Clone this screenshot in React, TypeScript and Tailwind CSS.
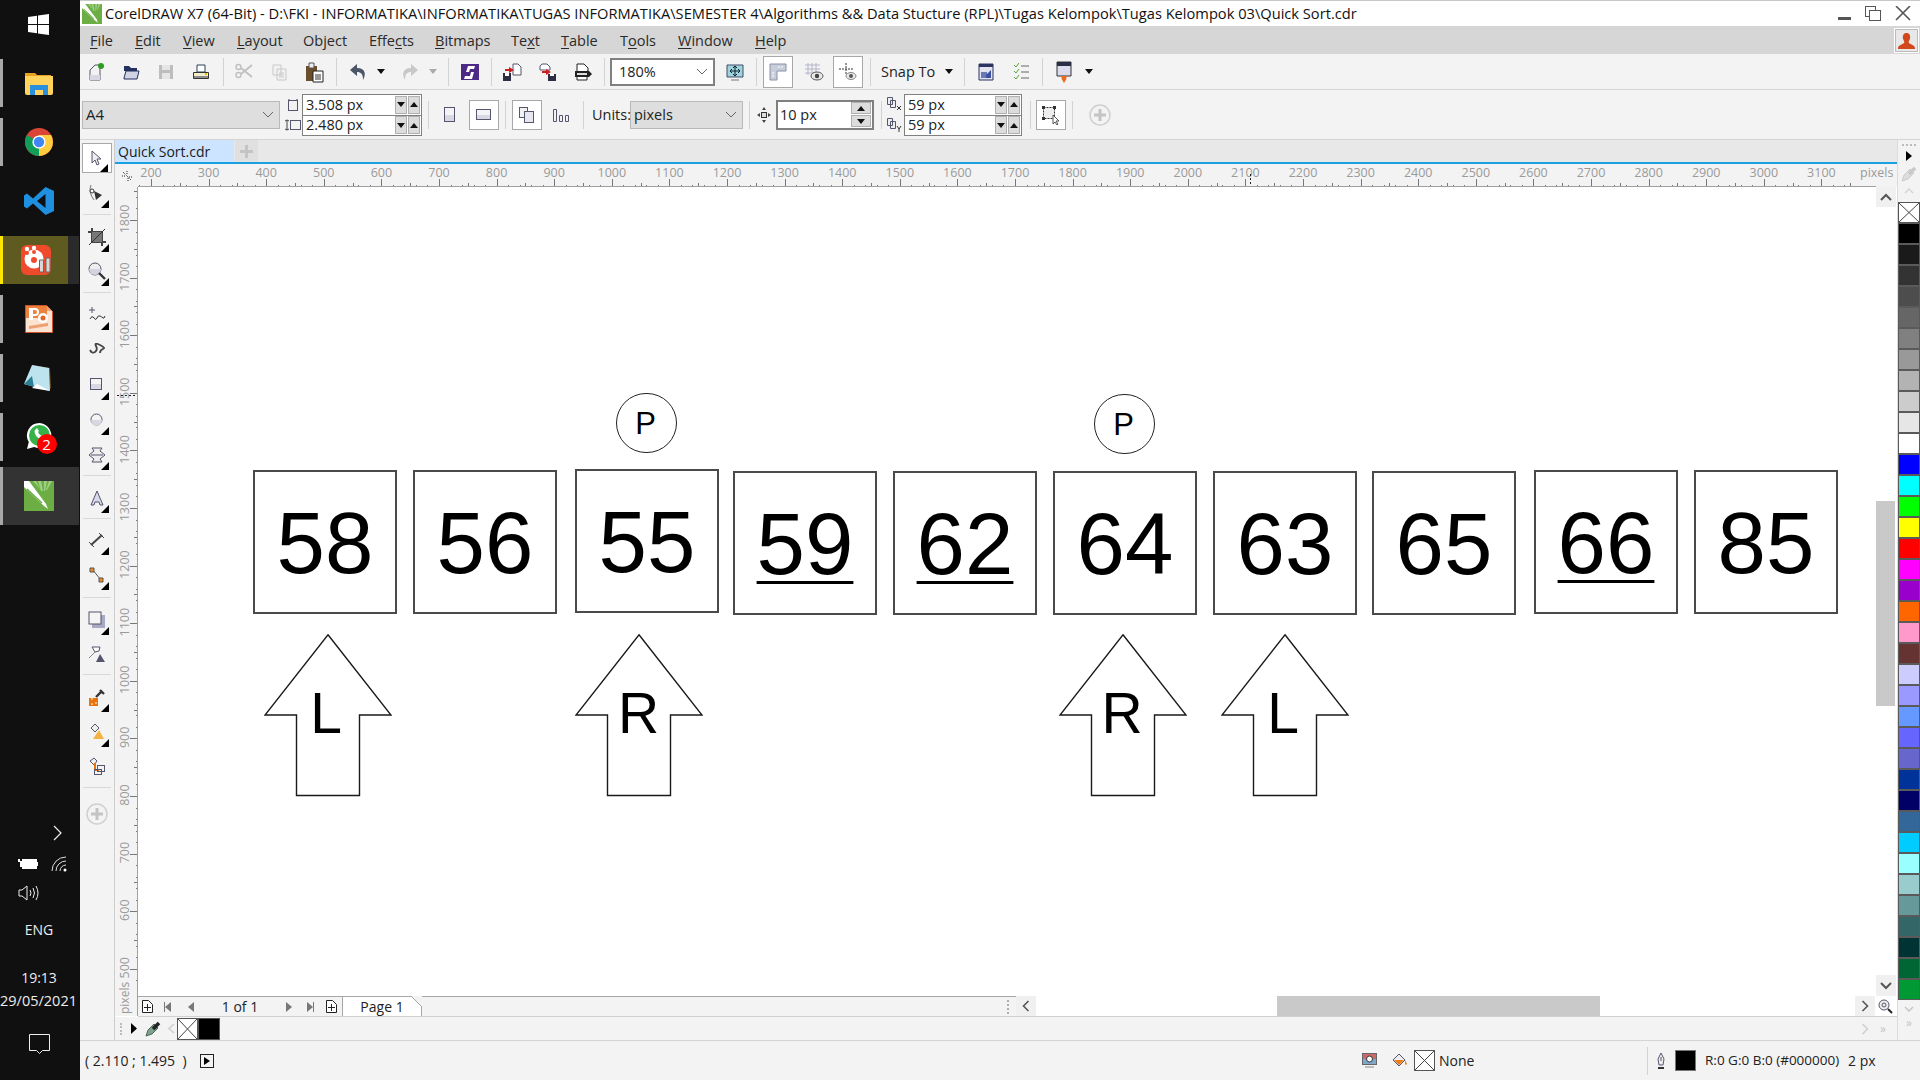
import React from "react";

const F = "[font-family:'Open_Sans',sans-serif]";
const ink = "#55556e";

function Ic({ w = 20, h = 20, children }: { w?: number; h?: number; children: React.ReactNode }) {
  return (
    <svg width={w} height={h} viewBox={`0 0 ${w} ${h}`} fill="none" className="block shrink-0">
      {children}
    </svg>
  );
}

function Sep() {
  return (
    <div className="w-[6px] h-full flex justify-center items-center shrink-0">
      <div className="w-px h-[28px] bg-[#d2d2d2]" />
    </div>
  );
}

function Caret({ gray }: { gray?: boolean }) {
  return (
    <Ic w={8} h={5}>
      <path d="M0 0h8L4 5z" fill={gray ? "#aaa" : "#111"} />
    </Ic>
  );
}

function Chev() {
  return (
    <Ic w={12} h={8}>
      <path d="M1 1l5 5 5-5" stroke="#666" />
    </Ic>
  );
}

function Corner() {
  return (
    <svg width="8" height="8" viewBox="0 0 8 8" className="absolute right-[3px] bottom-[0px]">
      <path d="M8 0v8H0z" fill="#000" />
    </svg>
  );
}

function CrossBox({ w, h, cls }: { w: number; h: number; cls?: string }) {
  return (
    <svg width={w} height={h} viewBox={`0 0 ${w} ${h}`} className={"block shrink-0 " + (cls ?? "")}>
      <rect x=".5" y=".5" width={w - 1} height={h - 1} fill="#fff" stroke="#555" />
      <path d={`M1 1L${w - 1} ${h - 1}M${w - 1} 1L1 ${h - 1}`} stroke="#444" />
    </svg>
  );
}

function CoreLogo({ s }: { s: number }) {
  return (
    <svg width={s} height={s} viewBox="0 0 30 30" className="block">
      <rect width="30" height="30" fill="#6cae44" />
      <path d="M0 6L20 25l4 3-2-5L5 0H0z" fill="#fff" />
      <path d="M3 8l15 14" stroke="#6cae44" strokeWidth="1.4" />
      <path d="M14 0h3l2 10h-2zM20 0h3l-2 10h-1zM9 0h3l4 8z" fill="#9fcf85" />
      <path d="M25 0h3l-5 9h-1z" fill="#9fcf85" />
    </svg>
  );
}

function Taskbar() {
  const Bar = ({ on = true }: { on?: boolean }) =>
    on ? <div className="absolute left-0 top-0 bottom-0 w-[3px] bg-[#a8a8a8]" /> : null;
  const Slot = ({ children, bar = true }: { children: React.ReactNode; bar?: boolean }) => (
    <div className="relative h-[48px] flex items-center justify-center mt-[11px] pr-[2px]">
      <Bar on={bar} />
      {children}
    </div>
  );
  return (
    <div className={"w-[79px] h-full bg-[#101010] flex flex-col shrink-0 text-[#ececec] text-[14px] " + F}>
      <div className="h-[48px] flex items-center justify-center pr-[2px]">
        <Ic w={21} h={21}>
          <path d="M0 3l9-1.2V10H0zM10 1.600L21 0v10H10zM0 11h9v8.200L0 18zM10 11h11v10l-11-1.600z" fill="#fff" />
        </Ic>
      </div>
      <Slot>
        <Ic w={28} h={24}>
          <path d="M0 2h10l2 2h14v5H0z" fill="#e9a321" />
          <path d="M0 5h28v17a2 2 0 01-2 2H2a2 2 0 01-2-2z" fill="#ffd35c" />
          <path d="M5 14h18v10h-5v-5h-8v5H5z" fill="#2a8fdc" />
        </Ic>
      </Slot>
      <Slot>
        <Ic w={28} h={28}>
          <circle cx="14" cy="14" r="14" fill="#db4437" />
          <path d="M14 14L1.900 7A14 14 0 0 0 14 28z" fill="#0f9d58" />
          <path d="M14 14v14A14 14 0 0 0 26.100 7H14z" fill="#ffcd40" />
          <circle cx="14" cy="14" r="6.600" fill="#fff" />
          <circle cx="14" cy="14" r="5.200" fill="#4285f4" />
        </Ic>
      </Slot>
      <Slot bar={false}>
        <Ic w={30} h={30}>
          <path d="M21.500 1L30 5v20l-8.500 4L9 17.500l-6 5-3-2V9.500l3-2 6 5zM21.500 8L13 15l8.500 7z" fill="#1f8fe0" />
        </Ic>
      </Slot>
      <div className="relative h-[48px] mt-[11px] flex bg-[#2a2a2a]">
        <div className="w-[3px] bg-[#ffe600]" />
        <div className="w-[65px] bg-[#5f5a20] flex items-center justify-center">
          <Ic w={30} h={30}>
            <rect width="30" height="30" rx="6" fill="#ef4a2b" />
            <circle cx="13" cy="14" r="9.500" fill="#fff" />
            <circle cx="13" cy="15" r="3" fill="#ef4a2b" />
            <circle cx="6" cy="8" r="2" fill="#ef4a2b" />
            <circle cx="13" cy="7" r="2" fill="#ef4a2b" />
            <circle cx="6" cy="4" r="2.200" fill="#fff" />
            <circle cx="13" cy="3" r="2.200" fill="#fff" />
            <path d="M18.500 15h4v12h-4zM25 13h4v14h-4z" fill="#d8d8d8" stroke="#666" />
          </Ic>
        </div>
      </div>
      <Slot>
        <Ic w={28} h={28}>
          <path d="M.5.5h21l6 6v21H.500z" fill="#fbe3d2" stroke="#c9532a" />
          <path d="M22 1l5 5h-5z" fill="#f2a67a" />
          <path d="M1 1h21v12H1z" fill="#f0813d" />
          <path d="M4 15V3h6a4 4 0 010 8H8v4z" fill="#fff" />
          <path d="M8 5h2a1.500 1.500 0 010 4H8z" fill="#f0813d" />
          <circle cx="18" cy="13" r="5" fill="#fff" />
          <circle cx="18" cy="13" r="2.500" fill="#e8622c" />
          <path d="M4 21l19-3v3L4 24z" fill="#f0a070" />
        </Ic>
      </Slot>
      <Slot>
        <Ic w={29} h={28}>
          <path d="M8 1l18 3 1 20-3 3z" fill="#6b4a18" />
          <path d="M8 1l17 3 1 23L0 20z" fill="#bde4ee" />
          <path d="M0 20l8-8 2 11z" fill="#2d7f96" />
          <path d="M13 20l13 7-18-3z" fill="#fff" />
        </Ic>
      </Slot>
      <Slot>
        <div className="relative w-[30px] h-[30px] pl-[2px]">
          <Ic w={27} h={28}>
            <path d="M13.500 1a12.500 12.500 0 00-10.700 19L1 27l7.200-1.900A12.500 12.500 0 1013.500 1z" fill="#fff" />
            <circle cx="13.500" cy="13.500" r="10.500" fill="#35b34a" />
            <path d="M9 8c-2 3 3 10 9 10l2-3-3-2-1 1c-2-1-3-2-4-4l1-1-2-3z" fill="#fff" />
          </Ic>
          <div className={"absolute left-[13px] top-[12px] w-[20px] h-[20px] rounded-full bg-[#f00] text-white text-[15px] leading-[20px] text-center " + F}>2</div>
        </div>
      </Slot>
      <div className="relative h-[58px] mt-[6px] bg-[#333333] flex items-center justify-center pr-[2px]">
        <Bar />
        <CoreLogo s={30} />
      </div>
      <div className="flex-1 flex flex-col">
        <div className="mt-[298px] h-[20px] flex justify-end pr-[16px] items-center">
          <Ic w={10} h={16}>
            <path d="M1 1l7 7-7 7" stroke="#eee" strokeWidth="1.200" />
          </Ic>
        </div>
        <div className="mt-[11px] h-[20px] flex items-center pl-[18px] gap-[13px]">
          <Ic w={20} h={12}>
            <path d="M0 1h2v3H0zM2 3h2v6H2z" fill="#fff" />
            <rect x="4.500" y="1.500" width="14" height="9" stroke="#fff" fill="#fff" />
            <path d="M19 4h1v4h-1z" fill="#fff" />
          </Ic>
          <Ic w={16} h={16}>
            <path d="M1 15A14 14 0 0115 1M5 15A10 10 0 0115 5M9 15a6 6 0 016-6" stroke="#ddd" />
            <circle cx="14" cy="14" r="1.500" fill="#fff" />
          </Ic>
        </div>
        <div className="mt-[9px] h-[20px] flex items-center pl-[18px]">
          <Ic w={21} h={18}>
            <path d="M1 6h3l5-4v14l-5-4H1z" stroke="#eee" />
            <path d="M12 6q2 3 0 6M15 4q3 5 0 10M18 2q4 7 0 14" stroke="#eee" />
          </Ic>
        </div>
        <div className="mt-[17px] h-[20px] leading-[20px] text-center pr-[1px]">ENG</div>
        <div className="mt-[28px] h-[20px] leading-[20px] text-center pr-[1px]">19:13</div>
        <div className="mt-[3px] h-[20px] leading-[20px] text-center text-[14.500px] whitespace-nowrap pr-[2px]">29/05/2021</div>
        <div className="mt-[23px] flex justify-center pr-[1px]">
          <Ic w={21} h={20}>
            <path d="M.5.5h20v16h-7l-3 3-3-3h-7z" stroke="#eee" />
          </Ic>
        </div>
      </div>
    </div>
  );
}

function Menu() {
  const U = ({ children }: { children: string }) => <span className="underline underline-offset-2">{children}</span>;
  return (
    <div className={"h-[28px] bg-[#d6d6d6] flex items-center pl-[10px] pt-[1px] text-[14.500px] text-[#2a2a2a] relative " + F}>
      <div className="w-[45px]"><U>F</U>ile</div>
      <div className="w-[48px]"><U>E</U>dit</div>
      <div className="w-[54px]"><U>V</U>iew</div>
      <div className="w-[66px]"><U>L</U>ayout</div>
      <div className="w-[66px]">Ob<U>j</U>ect</div>
      <div className="w-[66px]">Effe<U>c</U>ts</div>
      <div className="w-[76px]"><U>B</U>itmaps</div>
      <div className="w-[50px]">Te<U>x</U>t</div>
      <div className="w-[59px]"><U>T</U>able</div>
      <div className="w-[58px]">T<U>o</U>ols</div>
      <div className="w-[77px]"><U>W</U>indow</div>
      <div><U>H</U>elp</div>
      <div className="ml-auto mr-[1px] -mt-[1px] w-[25px] h-[25px] border border-white bg-[#bbb] flex items-center justify-center">
        <Ic w={21} h={21}>
          <path d="M0 0h21v21H0z" fill="#e8e8e8" />
          <path d="M10.500 3c2.700 0 4 2.200 3.600 5.300-.3 1.800-1.400 2.700-1.400 4 0 1.800 6.300 2.700 6.300 5.700v1H2v-1c0-3 6.300-3.900 6.300-5.700 0-1.300-1.100-2.200-1.400-4C6.500 5.200 7.800 3 10.500 3z" fill="#d2481c" />
        </Ic>
      </div>
    </div>
  );
}

function Btn({ cls, children }: { cls: string; children: React.ReactNode }) {
  return <div className={"flex items-center justify-center shrink-0 " + cls}>{children}</div>;
}

function Toolbar() {
  const box = "h-[32px] border border-[#a8a8a8] bg-white";
  return (
    <div className={"h-[36px] bg-[#f3f3f3] border-b border-[#d4d4d4] flex items-center text-[14.500px] text-[#222] " + F}>
      <Btn cls="w-[35px] -ml-[2px]">
        <Ic>
          <path d="M4 8l5-5h5v15H4z" fill="#f2f2f2" stroke={ink} />
          <path d="M4 13h10v5H4z" fill="#d8d8e2" />
          <circle cx="15" cy="4" r="3" fill="#2f9b22" />
        </Ic>
      </Btn>
      <Btn cls="w-[35px]">
        <Ic>
          <path d="M3 4h5l2 2h6v3H3z" fill="#24305e" />
          <path d="M3 16l2-7h13l-2 8H3z" fill="#cfd3e4" stroke="#24305e" />
        </Ic>
      </Btn>
      <Btn cls="w-[35px]">
        <Ic>
          <path d="M3 3h14v14H3z" fill="#bdbdbd" />
          <path d="M6 3h8v5H6z" fill="#e6e6e6" />
          <path d="M6 11h8v6H6z" fill="#e6e6e6" />
        </Ic>
      </Btn>
      <Btn cls="w-[35px]">
        <Ic>
          <path d="M6 3h8v7H6z" fill="#fff" stroke="#2c3e5a" />
          <path d="M2.500 10.500h15v6h-15z" fill="#f1edc9" stroke="#333" />
          <path d="M3 14h14v2H3z" fill="#8a8a8a" />
          <path d="M14 11h2v2h-2z" fill="#e4c200" />
        </Ic>
      </Btn>
      <div className="ml-[2px]"><Sep /></div>
      <Btn cls="w-[35px]">
        <Ic>
          <path d="M18 3L7 12M18 15L7 6" stroke="#c0c0c0" strokeWidth="1.800" />
          <circle cx="4.500" cy="5" r="2.500" stroke="#c0c0c0" strokeWidth="1.400" />
          <circle cx="4.500" cy="13" r="2.500" stroke="#c0c0c0" strokeWidth="1.400" />
        </Ic>
      </Btn>
      <Btn cls="w-[35px]">
        <Ic>
          <path d="M4 3h8v10H4zM8 7h9v11H8z" fill="#f2f2f2" stroke="#c8c8c8" />
          <path d="M10 11h5M10 13h5M10 15h5" stroke="#c8c8c8" />
        </Ic>
      </Btn>
      <Btn cls="w-[35px]">
        <Ic w={20} h={22}>
          <path d="M2 5h11v15H2z" fill="#6b4f2a" />
          <path d="M5 2h5v5H5z" fill="#eee" stroke="#555" />
          <path d="M9 10h10v11H9z" fill="#fff" stroke="#222" />
          <path d="M11 14h6M11 16h6M11 18h6" stroke="#333" />
        </Ic>
      </Btn>
      <div className="ml-[2px]"><Sep /></div>
      <Btn cls="w-[32px] ml-[3px]">
        <Ic w={18} h={18}>
          <path d="M8 1L1 7l7 6V9c4 0 6 2 6 8 3-5 3-12-6-12z" fill="#4a5568" />
        </Ic>
      </Btn>
      <Btn cls="w-[14px]"><Caret /></Btn>
      <Btn cls="w-[30px] ml-[7px]">
        <Ic w={18} h={18}>
          <path d="M10 1l7 6-7 6V9c-4 0-6 2-6 8-3-5-3-12 6-12z" fill="#c8c8c8" />
        </Ic>
      </Btn>
      <Btn cls="w-[14px] ml-[1px]"><Caret gray /></Btn>
      <div className="ml-[5px]"><Sep /></div>
      <Btn cls="w-[34px] ml-[2px]">
        <Ic>
          <path d="M1 2h18v16H1z" fill="#4c2a86" />
          <path d="M15 4H8L6 10h5l-1 4H5l-1 3h8l2-7H9l1-3h4z" fill="#fff" />
        </Ic>
      </Btn>
      <div className="ml-[1px]"><Sep /></div>
      <Btn cls="w-[36px]">
        <Ic>
          <path d="M11 2h5l3 3v8h-8z" fill="#fff" stroke={ink} />
          <path d="M7 5l5 3-5 3V9H3V7h4z" fill="#cc1f1f" />
          <path d="M1 11h8v8H1z" fill="#2d2d44" />
          <path d="M3 11h4v3H3z" fill="#fff" />
        </Ic>
      </Btn>
      <Btn cls="w-[36px]">
        <Ic>
          <path d="M4 2h5l3 3v3H2V4z" fill="#fff" stroke={ink} />
          <path d="M8 7l5 3-5 3v-2H4V9h4z" fill="#cc1f1f" />
          <path d="M10 12h8v7h-8z" fill="#2d2d44" />
          <path d="M12 12h4v2h-4z" fill="#fff" />
        </Ic>
      </Btn>
      <Btn cls="w-[34px]">
        <Ic>
          <path d="M4 2h7l4 4v3h-1v9H4z" fill="#fff" stroke="#222" />
          <path d="M2 9h14l3 3-3 3H2z" fill="#222" />
          <path d="M4 11h10v2H4z" fill="#ddd" />
        </Ic>
      </Btn>
      <div className="ml-[1px]"><Sep /></div>
      <div className="ml-[3px] w-[105px] flex items-center justify-between pl-[7px] pr-[5px] shrink-0 border-2 border-[#808080] h-[28px] bg-white">
        <span>180%</span>
        <Chev />
      </div>
      <Btn cls="w-[34px] ml-[3px]">
        <Ic>
          <path d="M2 3h16v12H2z" fill="#9ed4dc" stroke="#444a6a" />
          <path d="M10 4v10M5 9h10M8 6l2-2 2 2M8 12l2 2 2-2M7 7L5 9l2 2M13 7l2 2-2 2" stroke="#123" />
          <path d="M6 18h8" stroke="#777" />
        </Ic>
      </Btn>
      <div className="ml-[1px]"><Sep /></div>
      <Btn cls={"w-[30px] ml-[4px] " + box}>
        <Ic>
          <path d="M2 2h16v7H9v9H2z" fill="#c8cdda" stroke="#8a90a6" />
          <path d="M11 4v2M14 4v2M4 11h2M4 14h2" stroke="#fff" />
        </Ic>
      </Btn>
      <Btn cls="w-[38px] ml-[2px]">
        <Ic>
          <path d="M1 3h15M1 7h15M1 11h12M4 1v12M8 1v12M12 1v10" stroke="#b4b4cc" />
          <ellipse cx="13" cy="14" rx="6" ry="4" fill="#e8e8e8" stroke="#555" />
          <circle cx="13" cy="14" r="2.200" fill="#444" />
        </Ic>
      </Btn>
      <Btn cls={"w-[30px] " + box}>
        <Ic>
          <path d="M8 1v12M1 7h14" stroke="#333" strokeDasharray="2 1" />
          <ellipse cx="13" cy="14" rx="5" ry="3.500" fill="#e8e8e8" stroke="#888" />
          <circle cx="13" cy="14" r="2" fill="#555" />
        </Ic>
      </Btn>
      <div className="ml-[4px]"><Sep /></div>
      <div className="ml-[8px] w-[53px] shrink-0 whitespace-nowrap">Snap To</div>
      <Btn cls="w-[14px] ml-[8px]"><Caret /></Btn>
      <div className="ml-[5px]"><Sep /></div>
      <Btn cls="w-[34px] ml-[2px]">
        <Ic>
          <path d="M3 2h14v16H3z" fill="#e4e4f0" stroke="#2c3560" />
          <path d="M3 2h14v3H3z" fill="#2c3560" />
          <path d="M5 10h6v6H5z" fill="#6a7ab8" />
          <path d="M10 13l5-5v8h-5z" fill="#3c4fa0" />
        </Ic>
      </Btn>
      <Btn cls="w-[34px] ml-[1px]">
        <Ic>
          <path d="M3 3l2 2 3-4M3 9l2 2 3-4M3 15l2 2 3-4" stroke="#5aa23c" />
          <path d="M10 4h8M10 10h8M10 16h8" stroke="#666" />
        </Ic>
      </Btn>
      <div className="ml-[1px]"><Sep /></div>
      <Btn cls="w-[36px] ml-[1px]">
        <Ic w={20} h={22}>
          <path d="M3 1h14v14H3z" fill="#dcdcec" stroke="#333" />
          <path d="M3 1h14v4H3z" fill="#2a2f45" />
          <path d="M7 15h6l-1 3 1-1-3 5-3-5 1 1z" fill="#ef6a1c" />
        </Ic>
      </Btn>
      <Btn cls="w-[12px] ml-[1px]"><Caret /></Btn>
    </div>
  );
}

function Spin({ text }: { text: string }) {
  const b = "w-[12px] h-[18px] bg-[#dcdcdc] border border-[#b0b0b0] flex items-center justify-center";
  return (
    <div className="flex-1 min-h-0 w-full bg-white flex items-center justify-between pl-[3px] pr-[1px]">
      <span>{text}</span>
      <div className="flex gap-[1px]">
        <div className={b}><Caret /></div>
        <div className={b}><div className="rotate-180"><Caret /></div></div>
      </div>
    </div>
  );
}

function PropBar() {
  const btn = "h-[30px] border border-[#a8a8a8] bg-white";
  return (
    <div className={"h-[50px] bg-[#f3f3f3] border-b border-[#d4d4d4] flex items-center text-[14.500px] text-[#222] " + F}>
      <div className="ml-[2px] w-[198px] h-[28px] shrink-0 bg-[#dedede] border border-[#b8b8b8] flex items-center justify-between pl-[3px] pr-[5px]">
        <span className="text-[15px]">A4</span>
        <Chev />
      </div>
      <div className="ml-[3px] w-[19px] shrink-0 flex flex-col gap-[8px] items-center">
        <Ic w={12} h={13}>
          <path d="M2 1v1M10 1v1" stroke="#444" />
          <rect x=".5" y="2.500" width="9" height="10" fill="#f2f2f2" stroke={ink} transform="translate(1 0)" />
        </Ic>
        <Ic w={16} h={12}>
          <path d="M2 1v10M0 2l2-1 2 1M0 10l2 1 2-1" stroke="#444" />
          <rect x="5.500" y="1.500" width="10" height="9" fill="#f2f2f2" stroke={ink} />
        </Ic>
      </div>
      <div className="w-[120px] shrink-0 border border-[#808080] flex flex-col h-[42px] mt-[1px] divide-y divide-[#808080]">
        <Spin text="3.508 px" />
        <Spin text="2.480 px" />
      </div>
      <div className="ml-[3px]"><Sep /></div>
      <Btn cls="w-[38px]">
        <Ic w={12} h={16}>
          <rect x=".5" y=".5" width="10" height="14" fill="#f4f4f4" stroke={ink} />
          <path d="M1 8h9v6H1z" fill="#d8d8e2" />
        </Ic>
      </Btn>
      <Btn cls={"w-[30px] " + btn}>
        <Ic w={16} h={12}>
          <rect x=".5" y=".5" width="14" height="10" fill="#f4f4f4" stroke={ink} />
          <path d="M1 6h13v4H1z" fill="#d8d8e2" />
        </Ic>
      </Btn>
      <div className="ml-[3px]"><Sep /></div>
      <Btn cls={"w-[30px] ml-[4px] " + btn}>
        <Ic w={18} h={18}>
          <rect x="1.500" y="1.500" width="8" height="10" fill="#f2f2f2" stroke={ink} />
          <rect x="6.500" y="5.500" width="9" height="11" fill="#e6e6ee" stroke={ink} />
        </Ic>
      </Btn>
      <Btn cls="w-[38px]">
        <Ic w={18} h={14}>
          <path d="M1.500 1.500h3v12h-3zM7.500 7.500h3v6h-3zM13.500 7.500h3v6h-3z" stroke={ink} fill="#f2f2f2" />
        </Ic>
      </Btn>
      <Sep />
      <div className="ml-[6px] w-[38px] shrink-0 whitespace-nowrap">Units:</div>
      <div className="w-[113px] h-[28px] shrink-0 bg-[#dedede] border border-[#b8b8b8] flex items-center justify-between pl-[3px] pr-[5px]">
        <span>pixels</span>
        <Chev />
      </div>
      <div className="ml-[3px]"><Sep /></div>
      <Btn cls="w-[24px]">
        <Ic w={14} h={16}>
          <rect x="4.500" y="5.500" width="5" height="5" stroke="#333" fill="#ddd" />
          <path d="M7 0l2 3H5zM7 16l2-3H5zM0 8l3-2v4zM14 8l-3-2v4z" fill="#444" />
        </Ic>
      </Btn>
      <div className="w-[98px] h-[30px] shrink-0 bg-white border-2 border-[#808080] flex items-center justify-between pl-[2px] pr-[1px]">
        <span>10 px</span>
        <div className="flex flex-col gap-[1px]">
          <div className="w-[20px] h-[12px] bg-[#dcdcdc] border border-[#b0b0b0] flex items-center justify-center"><div className="rotate-180"><Caret /></div></div>
          <div className="w-[20px] h-[12px] bg-[#dcdcdc] border border-[#b0b0b0] flex items-center justify-center"><Caret /></div>
        </div>
      </div>
      <div className="ml-[4px]"><Sep /></div>
      <div className="w-[20px] shrink-0 flex flex-col items-center gap-[7px]">
        <Ic w={15} h={14}>
          <path d="M.5.5h5v7h-5zM3.500 3.500h5v7h-5z" stroke={ink} fill="#eee" />
          <path d="M10 9l4 4M14 9l-4 4" stroke="#333" />
        </Ic>
        <Ic w={15} h={14}>
          <path d="M.5.5h5v7h-5zM3.500 3.500h5v7h-5z" stroke={ink} fill="#eee" />
          <path d="M10 8l2 3 2-3M12 11v3" stroke="#333" />
        </Ic>
      </div>
      <div className="w-[118px] shrink-0 border border-[#808080] h-[42px] mt-[1px] flex flex-col divide-y divide-[#808080]">
        <Spin text="59 px" />
        <Spin text="59 px" />
      </div>
      <div className="ml-[5px]"><Sep /></div>
      <Btn cls={"w-[30px] ml-[3px] " + btn}>
        <Ic w={20} h={20}>
          <rect x="2.500" y="2.500" width="11" height="11" stroke="#333" strokeDasharray="2 1" fill="#eee" />
          <path d="M1 1h3v3H1zM12 1h3v3h-3zM1 12h3v3H1z" fill="#333" />
          <path d="M12 10v9l2-2 2 3 1-1-2-3h3z" fill="#fff" stroke="#555" />
        </Ic>
      </Btn>
      <div className="ml-[3px]"><Sep /></div>
      <Btn cls="w-[22px] ml-[14px]">
        <Plus />
      </Btn>
    </div>
  );
}

function Plus() {
  return (
    <Ic w={22} h={22}>
      <circle cx="11" cy="11" r="10" fill="#f3f3f3" stroke="#cfcfcf" strokeWidth="1.500" />
      <path d="M11 5v12M5 11h12" stroke="#c4c4c4" strokeWidth="3" />
    </Ic>
  );
}

function Tool({ cls = "", tri = true, children }: { cls?: string; tri?: boolean; children: React.ReactNode }) {
  return (
    <div className={"relative w-[30px] h-[30px] flex items-center justify-center shrink-0 " + cls}>
      {children}
      {tri ? <Corner /> : null}
    </div>
  );
}

function ToolSep({ cls }: { cls: string }) {
  return <div className={"w-[28px] h-px bg-[#d8d8d8] shrink-0 " + cls} />;
}

function Toolbox() {
  return (
    <div className="w-[35px] h-full bg-[#f3f3f3] border-r border-[#cdcdcd] flex flex-col items-center pt-[3px] shrink-0 pr-[1px]">
      <Tool cls="border border-[#a8a8a8] bg-white">
        <Ic w={14} h={17}>
          <path d="M2 1v12l3-3 2 5 2-1-2-5h4z" fill="#eee" stroke={ink} />
        </Ic>
      </Tool>
      <Tool cls="mt-[5px]">
        <Ic w={18} h={18}>
          <path d="M3 1q-3 7 3 15" stroke="#777" />
          <circle cx="4" cy="7" r="2" fill="#fff" stroke="#333" />
          <path d="M6 7l8 4-6 5z" fill="#333" />
        </Ic>
      </Tool>
      <ToolSep cls="mt-[6px]" />
      <Tool cls="mt-[7px]">
        <Ic w={18} h={18}>
          <path d="M4 0v14h14" stroke="#444" strokeWidth="2" />
          <path d="M0 4h14v14" stroke="#444" strokeWidth="2" />
          <path d="M4 4h10v10H4z" fill="#777" />
          <path d="M17 1L1 17" stroke="#333" />
        </Ic>
      </Tool>
      <Tool cls="mt-[4px]">
        <Ic w={18} h={18}>
          <circle cx="7" cy="7" r="6" fill="#eee" stroke={ink} />
          <path d="M1 7h12a6 6 0 01-12 0z" fill="#d4d4e0" />
          <path d="M11 11l6 6" stroke="#333" strokeWidth="2.400" />
        </Ic>
      </Tool>
      <ToolSep cls="mt-[6px]" />
      <Tool cls="mt-[7px]">
        <Ic w={18} h={16}>
          <path d="M4 0v6M1 3h6" stroke={ink} />
          <path d="M2 12q2-4 4-1t3 0 3-2 3 2 2-2" stroke="#333" />
        </Ic>
      </Tool>
      <Tool cls="mt-[4px]" tri={false}>
        <Ic w={16} h={12}>
          <path d="M1 7q2 4 5 2t1-6 4-1 3 4-3 4" stroke="#444" strokeWidth="1.800" />
        </Ic>
      </Tool>
      <Tool cls="mt-[6px]">
        <Ic w={14} h={14}>
          <rect x=".5" y=".5" width="11" height="11" fill="#f4f4f4" stroke={ink} />
          <path d="M1 6h10v5H1z" fill="#d8d8e2" />
        </Ic>
      </Tool>
      <Tool cls="mt-[5px]">
        <Ic w={14} h={14}>
          <circle cx="6.500" cy="6.500" r="5.500" fill="#f4f4f4" stroke={ink} />
          <path d="M1 7h11a5.500 5.500 0 01-11 0z" fill="#d8d8e2" />
        </Ic>
      </Tool>
      <Tool cls="mt-[5px]">
        <Ic w={18} h={16}>
          <path d="M4 1h10l-2 3 5 4-5 4 2 3H4l2-3-5-4 5-4z" fill="#eee" stroke={ink} />
          <path d="M3 8h12" stroke={ink} />
        </Ic>
      </Tool>
      <ToolSep cls="mt-[5px]" />
      <Tool cls="mt-[7px]">
        <Ic w={16} h={16}>
          <path d="M8 1l6 14h-3l-1-3H6l-1 3H2z" fill="#d8d8e8" stroke={ink} />
        </Ic>
      </Tool>
      <ToolSep cls="mt-[5px]" />
      <Tool cls="mt-[6px]">
        <Ic w={16} h={16}>
          <path d="M2 13L13 3" stroke="#444" strokeWidth="2" />
          <path d="M0 10l5 5M10 1l5 5" stroke="#444" />
        </Ic>
      </Tool>
      <Tool cls="mt-[5px]">
        <Ic w={16} h={16}>
          <path d="M3 2l9 11" stroke={ink} />
          <path d="M1 1h4v4H1zM10 11h4v4h-4z" fill="#f08a1d" stroke="#555" />
        </Ic>
      </Tool>
      <ToolSep cls="mt-[7px]" />
      <Tool cls="mt-[7px]">
        <Ic w={18} h={18}>
          <rect x="4" y="4" width="13" height="13" fill="#a9a9c4" />
          <rect x="1" y="1" width="12" height="12" fill="#f4f4f4" stroke={ink} />
        </Ic>
      </Tool>
      <Tool cls="mt-[4px]" tri={false}>
        <Ic w={18} h={18}>
          <path d="M4 2h8l-1 4-4 1z" fill="#fff" stroke={ink} />
          <path d="M1 13l6-6" stroke="#888" />
          <path d="M12 9l5 8h-9z" fill={ink} />
        </Ic>
      </Tool>
      <ToolSep cls="mt-[5px]" />
      <Tool cls="mt-[7px]">
        <Ic w={18} h={18}>
          <path d="M1 10h9v8H1z" fill="#e8720c" />
          <path d="M3 10h2v2H3zM7 14h2v2H7zM3 15h2v2H3z" fill="#f7b66b" />
          <path d="M8 9l6-6M12 2l4 4" stroke="#333" strokeWidth="2.400" />
        </Ic>
      </Tool>
      <Tool cls="mt-[5px]">
        <Ic w={18} h={18}>
          <path d="M3 5l4-4 4 4-4 4z" fill="#eee" stroke={ink} />
          <path d="M11 7l5 9H5z" fill="#f2b344" />
        </Ic>
      </Tool>
      <Tool cls="mt-[4px]" tri={false}>
        <Ic w={18} h={18}>
          <path d="M2 4l4-3 3 3-3 4z" fill="#eee" stroke={ink} />
          <path d="M7 6v7h4" stroke="#e8720c" strokeWidth="2" />
          <rect x="9.500" y="8.500" width="7" height="6" stroke={ink} />
          <rect x="6.500" y="12.500" width="7" height="5" stroke={ink} />
        </Ic>
      </Tool>
      <ToolSep cls="mt-[6px]" />
      <div className="mt-[15px]"><Plus /></div>
    </div>
  );
}

const tx = (v: number) => 13 + (v - 200) * 0.576;
const ty = (v: number) => 321 + (1300 - v) * 0.576;
const range = (a: number, b: number, s: number) => {
  const r: number[] = [];
  for (let v = a; v <= b; v += s) r.push(v);
  return r;
};

function HRuler() {
  return (
    <svg width="1759" height="23" className="block" fontFamily="'Open Sans',sans-serif" fontSize="12.500">
      <rect width="1759" height="23" fill="#f3f3f3" />
      {range(180, 3150, 10).map((v) => {
        const x = Math.round(tx(v)) + 0.5;
        const h = v % 100 === 0 ? 7 : v % 50 === 0 ? 3 : 1;
        return v % 20 === 0 || v % 50 === 0 ? <path key={v} d={`M${x} ${22 - h}v${h}`} stroke="#777" /> : null;
      })}
      {range(200, 3100, 100).map((v) => (
        <text key={v} x={tx(v)} y="13" textAnchor="middle" fill="#9a9a9a">{v}</text>
      ))}
      <text x="1722" y="13" fill="#9a9a9a">pixels</text>
      <path d="M1112.500 10v13" stroke="#222" strokeDasharray="2 2" />
      <path d="M0 22.500H1738" stroke="#a0a0a0" />
    </svg>
  );
}

function VRuler() {
  return (
    <svg width="23" height="829" className="block shrink-0" fontFamily="'Open Sans',sans-serif" fontSize="12.500">
      <rect width="23" height="829" fill="#f3f3f3" />
      {range(480, 1860, 10).map((v) => {
        const y = Math.round(ty(v)) + 0.5;
        const h = v % 100 === 0 ? 7 : v % 50 === 0 ? 3 : 1;
        return (v % 20 === 0 || v % 50 === 0) && y > 0 ? <path key={v} d={`M${22 - h} ${y}h${h}`} stroke="#777" /> : null;
      })}
      {range(500, 1800, 100).map((v) => (
        <text key={v} transform={`translate(14 ${ty(v) - 1}) rotate(-90)`} textAnchor="middle" fill="#9a9a9a">{v}</text>
      ))}
      <text transform="translate(14 827) rotate(-90)" fontSize="12" fill="#9a9a9a">pixels</text>
      <path d="M2 208.500h21" stroke="#222" strokeDasharray="2 2" />
      <path d="M22.500 0V829" stroke="#a0a0a0" />
    </svg>
  );
}

function Cell({ cls, n, u }: { cls: string; n: string; u?: boolean }) {
  return (
    <div className={"absolute w-[144px] h-[144px] border-2 border-[#4a4a4a] bg-white flex items-center justify-center text-[87px] leading-none text-black [font-family:'Liberation_Sans',sans-serif] " + cls}>
      <span className={u ? "underline decoration-[3px] underline-offset-[7px]" : ""}>{n}</span>
    </div>
  );
}

function Arrow({ cls, l, lc }: { cls: string; l: string; lc: string }) {
  return (
    <div className={"absolute w-[128px] h-[163px] " + cls}>
      <svg width="128" height="163" viewBox="0 0 128 163" className="block">
        <path d="M64 .8L127 81H95.500V161.500H32.500V81H1z" fill="#fff" stroke="#1a1a1a" strokeWidth="1.400" />
      </svg>
      <div className={"absolute left-0 right-0 top-[59px] h-[40px] flex items-center justify-center text-[57px] leading-none text-black [font-family:'Liberation_Sans',sans-serif] " + lc}>{l}</div>
    </div>
  );
}

function Pivot({ cls }: { cls: string }) {
  return (
    <div className={"absolute w-[61px] h-[60px] rounded-full border-[1.500px] border-[#222] bg-white flex items-center justify-center pr-[2px] text-[31px] leading-none text-black [font-family:'Liberation_Sans',sans-serif] " + cls}>P</div>
  );
}

function Canvas() {
  return (
    <div className="relative flex-1 bg-white overflow-hidden">
      <Pivot cls="left-[478px] top-[206px]" />
      <Pivot cls="left-[956px] top-[207px]" />
      <Cell cls="left-[115px] top-[283px]" n="58" />
      <Cell cls="left-[275px] top-[283px]" n="56" />
      <Cell cls="left-[437px] top-[282px]" n="55" />
      <Cell cls="left-[595px] top-[284px]" n="59" u />
      <Cell cls="left-[755px] top-[284px]" n="62" u />
      <Cell cls="left-[915px] top-[284px]" n="64" />
      <Cell cls="left-[1075px] top-[284px]" n="63" />
      <Cell cls="left-[1234px] top-[284px]" n="65" />
      <Cell cls="left-[1396px] top-[283px]" n="66" u />
      <Cell cls="left-[1556px] top-[283px]" n="85" />
      <Arrow cls="left-[126px] top-[447px]" l="L" lc="pr-[4px]" />
      <Arrow cls="left-[437px] top-[447px]" l="R" lc="pr-[1px]" />
      <Arrow cls="left-[921px] top-[447px]" l="R" lc="pr-[2px]" />
      <Arrow cls="left-[1083px] top-[447px]" l="L" lc="pr-[4px]" />
    </div>
  );
}

function VScroll() {
  return (
    <div className="w-[21px] h-full bg-white flex flex-col items-start shrink-0">
      <div className="w-[20px] h-[20px] bg-[#f0f0f0] flex items-center justify-center">
        <Ic w={12} h={8}><path d="M1 7l5-5 5 5" stroke="#555" strokeWidth="2" /></Ic>
      </div>
      <div className="w-[19px] h-[205px] bg-[#c9c9c9] mt-[294px]" />
      <div className="flex-1" />
      <div className="w-[20px] h-[21px] bg-[#f0f0f0] flex items-center justify-center">
        <Ic w={12} h={8}><path d="M1 1l5 5 5-5" stroke="#555" strokeWidth="2" /></Ic>
      </div>
    </div>
  );
}

function PageIcon() {
  return (
    <Ic w={11} h={13}>
      <path d="M.5.5h6l4 4v8H.500z" fill="#fff" stroke="#222" />
      <path d="M5.500 4v7M2 7.500h7" stroke="#222" />
    </Ic>
  );
}

function PageBar() {
  const Tri = ({ l, bar }: { l?: boolean; bar?: boolean }) => (
    <Ic w={8} h={10}>
      {l ? <path d="M7 0v10L1 5z" fill="#777" /> : <path d="M1 0v10l6-5z" fill="#777" />}
      {bar ? <path d={l ? "M.5 0v10" : "M7.500 0v10"} stroke="#777" /> : null}
    </Ic>
  );
  return (
    <div className={"h-[21px] flex items-stretch text-[14px] text-[#222] shrink-0 border-b border-[#d0d0d0] " + F}>
      <div className="w-[204px] bg-[#f3f3f3] border-t border-[#a6a6a6] flex items-center shrink-0">
        <div className="w-[18px] flex justify-center"><PageIcon /></div>
        <div className="w-[23px] flex justify-center"><Tri l bar /></div>
        <div className="w-[23px] flex justify-center"><Tri l /></div>
        <div className="w-[76px] text-center whitespace-nowrap">1 of 1</div>
        <div className="w-[22px] flex justify-center"><Tri /></div>
        <div className="w-[20px] flex justify-center"><Tri bar /></div>
        <div className="w-[22px] flex justify-center"><PageIcon /></div>
      </div>
      <div className="relative w-[80px] bg-white border-l border-r border-[#a6a6a6] flex items-center justify-center shrink-0 border-t">
        Page 1
        <svg width="11" height="11" viewBox="0 0 11 11" className="absolute -right-[1px] -top-[1px]">
          <path d="M0 0h11v11z" fill="#f3f3f3" />
          <path d="M0 0l11 11" stroke="#a6a6a6" />
        </svg>
      </div>
      <div className="w-[578px] bg-[#f3f3f3] border-t border-[#a6a6a6] shrink-0" />
      <div className="w-[16px] shrink-0 bg-[#f3f3f3] border-t border-[#a6a6a6] flex items-center justify-center">
        <div className="w-[2px] h-[14px] border-l-2 border-dotted border-[#b0b0b0]" />
      </div>
      <div className="w-[20px] bg-[#f0f0f0] flex items-center justify-center shrink-0">
        <Ic w={8} h={12}><path d="M6.500 1l-5 5 5 5" stroke="#555" strokeWidth="1.600" /></Ic>
      </div>
      <div className="w-[241px] bg-white shrink-0" />
      <div className="w-[323px] bg-[#c9c9c9] shrink-0" />
      <div className="flex-1 bg-white" />
      <div className="w-[20px] bg-[#f0f0f0] flex items-center justify-center shrink-0">
        <Ic w={8} h={12}><path d="M1.500 1l5 5-5 5" stroke="#555" strokeWidth="1.600" /></Ic>
      </div>
      <div className="w-[21px] bg-white flex items-center justify-center shrink-0">
        <Ic w={15} h={15}>
          <circle cx="6" cy="6" r="5" fill="#eee" stroke={ink} />
          <circle cx="6" cy="6" r="2" stroke={ink} />
          <path d="M10 10l4 4" stroke="#222" strokeWidth="2" />
        </Ic>
      </div>
      <div className="w-[1px] shrink-0" />
    </div>
  );
}

function Dropper({ gray }: { gray?: boolean }) {
  return (
    <Ic w={16} h={16}>
      <path d="M1 15l2-6 6-6 4 4-6 6z" fill={gray ? "#ddd" : "#7fa08c"} stroke={gray ? "#ccc" : "#4a6a5a"} />
      <path d="M8 8l6-6" stroke={gray ? "#c8c8c8" : "#222"} strokeWidth="3.500" />
    </Ic>
  );
}

function Docker() {
  return (
    <div className="h-[23px] bg-[#f3f3f3] flex items-center shrink-0">
      <div className="w-[12px] flex justify-center">
        <div className="w-[2px] h-[12px] border-l-2 border-dotted border-[#bbb]" />
      </div>
      <div className="w-[13px] flex justify-center"><Ic w={6} h={11}><path d="M0 0l6 5.500L0 11z" fill="#000" /></Ic></div>
      <div className="w-[25px] flex justify-center"><Dropper /></div>
      <div className="w-[12px] flex justify-center">
        <Ic w={7} h={11}><path d="M6 1L1 5.500 6 10" stroke="#d0d0d0" strokeWidth="1.600" /></Ic>
      </div>
      <CrossBox w={21} h={22} />
      <div className="w-[22px] h-[22px] bg-black border border-[#555]" />
      <div className="flex-1" />
      <div className="w-[18px] flex justify-center"><Ic w={8} h={12}><path d="M1.500 1l5 5-5 5" stroke="#d0d0d0" strokeWidth="1.600" /></Ic></div>
      <div className="w-[18px] text-[12px] text-[#c4c4c4] text-center leading-none [font-family:'Open_Sans',sans-serif]">»</div>
      <div className="w-[5px]" />
    </div>
  );
}

const colours = ["#000000", "#1a1a1a", "#333333", "#4d4d4d", "#666666", "#808080", "#999999", "#b3b3b3", "#cccccc", "#e6e6e6", "#ffffff", "#0000ff", "#00ffff", "#00ff00", "#ffff00", "#ff0000", "#ff00ff", "#9900cc", "#ff6600", "#ff99cc", "#663333", "#ccccff", "#9999ff", "#6699ff", "#6666ff", "#6666cc", "#003399", "#000066", "#336699", "#00ccff", "#99ffff", "#99cccc", "#669999", "#336666", "#003333", "#006633", "#009933"];

function Palette() {
  return (
    <div className="w-[23px] h-full bg-[#f3f3f3] border-l border-[#dcdcdc] flex flex-col items-center shrink-0 relative">
      <div className="mt-[4px] w-[14px] h-[2px] border-t-2 border-dotted border-[#bbb]" />
      <div className="mt-[5px]"><Ic w={6} h={10}><path d="M0 0l6 5-6 5z" fill="#000" /></Ic></div>
      <div className="mt-[5px]"><Dropper gray /></div>
      <div className="mt-[5px] h-[9px]"><Ic w={10} h={7}><path d="M1 6l4-4 4 4" stroke="#d4d4d4" strokeWidth="1.400" /></Ic></div>
      <div className="mt-[6px] w-[22px] flex flex-col">
        <CrossBox w={22} h={21} />
        {colours.map((c) => (
          <div key={c} className="h-[21px] w-[22px] border border-[#5a5a5a]" style={{ backgroundColor: c }} />
        ))}
      </div>
      <div className="mt-[6px]"><Ic w={10} h={7}><path d="M1 1l4 4 4-4" stroke="#c4c4c4" strokeWidth="1.400" /></Ic></div>
      <div className="mt-[4px] text-[12px] leading-none text-[#c4c4c4] [font-family:'Open_Sans',sans-serif]">»</div>
    </div>
  );
}

function StatusBar() {
  return (
    <div className={"h-[40px] bg-[#f3f3f3] border-t border-[#d4d4d4] flex items-center text-[14px] text-[#222] shrink-0 " + F}>
      <div className="ml-[5px] w-[115px] whitespace-pre">( 2.110 ; 1.495  )</div>
      <div className="w-[14px] h-[14px] border border-[#222] flex items-center justify-center">
        <Ic w={6} h={8}><path d="M0 0l6 4-6 4z" fill="#000" /></Ic>
      </div>
      <div className="ml-[1147px] w-[16px] flex justify-center">
        <Ic w={15} h={15}>
          <rect x=".5" y=".5" width="14" height="11" fill="#c86a6a" stroke="#666" />
          <rect x="1" y="6" width="13" height="5" fill="#7fa8c8" />
          <circle cx="7.500" cy="6" r="3" fill="#fff" stroke="#333" />
          <path d="M3 14h9" stroke="#888" />
        </Ic>
      </div>
      <div className="ml-[15px] w-[16px] flex justify-center">
        <Ic w={16} h={15}>
          <path d="M7 1l6 6-6 6-6-6z" fill="#eee" stroke={ink} />
          <path d="M2 7h10l-5 5z" fill="#ef7c10" />
          <path d="M13 7l2 4-1 1-1-1z" fill="#ef7c10" />
        </Ic>
      </div>
      <CrossBox w={21} h={21} cls="ml-[6px]" />
      <div className="ml-[4px] w-[208px]">None</div>
      <div className="w-px h-[28px] bg-[#d2d2d2]" />
      <div className="ml-[4px] w-[18px] flex justify-center">
        <Ic w={10} h={18}>
          <path d="M5 1l3 6-1 6H3L2 7z" fill="#eee" stroke={ink} />
          <path d="M5 5v4" stroke={ink} />
          <path d="M2 15h6v2H2z" fill="#333" />
        </Ic>
      </div>
      <div className="ml-[5px] w-[21px] h-[21px] bg-black border border-[#777]" />
      <div className="ml-[9px] w-[143px] whitespace-nowrap text-[13.500px]">R:0 G:0 B:0 (#000000)</div>
      <div className="whitespace-nowrap">2 px</div>
    </div>
  );
}

export default function App() {
  return (
    <div className="w-[1920px] h-[1080px] flex overflow-hidden bg-white">
      <Taskbar />
      <div className="flex-1 flex flex-col min-w-0 border-l border-[#101010]">
        <div className={"h-[26px] bg-white border-t border-[#c8c8c8] flex items-center pl-[2px] text-[14.650px] text-[#111] shrink-0 " + F}>
          <CoreLogo s={20} />
          <div className="ml-[3px] whitespace-nowrap">CorelDRAW X7 (64-Bit) - D:\FKI - INFORMATIKA\INFORMATIKA\TUGAS INFORMATIKA\SEMESTER 4\Algorithms && Data Stucture (RPL)\Tugas Kelompok\Tugas Kelompok 03\Quick Sort.cdr</div>
          <div className="ml-auto flex items-center gap-[14px] pr-[9px]">
            <div className="w-[13px] h-[3px] bg-[#555] mt-[10px]" />
            <Ic w={16} h={15}>
              <rect x=".5" y=".5" width="10" height="10" stroke="#555" />
              <rect x="4.500" y="4.500" width="11" height="10" fill="#fff" stroke="#555" />
            </Ic>
            <Ic w={16} h={15}>
              <path d="M1 0l14 14M15 0L1 14" stroke="#555" strokeWidth="1.600" />
            </Ic>
          </div>
        </div>
        <Menu />
        <Toolbar />
        <PropBar />
        <div className="flex-1 flex min-h-0">
          <Toolbox />
          <div className="flex-1 flex flex-col min-w-0">
            <div className={"h-[24px] bg-[#e8e8e8] border-b-2 border-[#1ba1e2] flex shrink-0 text-[14px] text-[#1a1a1a] " + F}>
              <div className="w-[119px] bg-[#cce4ff] pl-[3px] leading-[23px] whitespace-nowrap">Quick Sort.cdr</div>
              <div className="ml-[1px] w-[23px] bg-[#e0e0e0] flex items-center justify-center">
                <Ic w={13} h={13}><path d="M6.500 0v13M0 6.500h13" stroke="#c4c4c4" strokeWidth="3" /></Ic>
              </div>
            </div>
            <div className="h-[23px] flex shrink-0">
              <div className="w-[23px] bg-[#f3f3f3] flex items-center justify-center">
                <Ic w={12} h={12}>
                  <path d="M2 2l8 8M6 1v4M1 6h4M7 11V7M11 7H7" stroke="#222" strokeDasharray="1 1" />
                </Ic>
              </div>
              <HRuler />
            </div>
            <div className="flex-1 flex min-h-0">
              <VRuler />
              <div className="flex-1 flex flex-col min-w-0">
                <div className="flex-1 flex min-h-0">
                  <Canvas />
                  <VScroll />
                </div>
                <PageBar />
              </div>
            </div>
            <Docker />
          </div>
          <Palette />
        </div>
        <StatusBar />
      </div>
    </div>
  );
}
